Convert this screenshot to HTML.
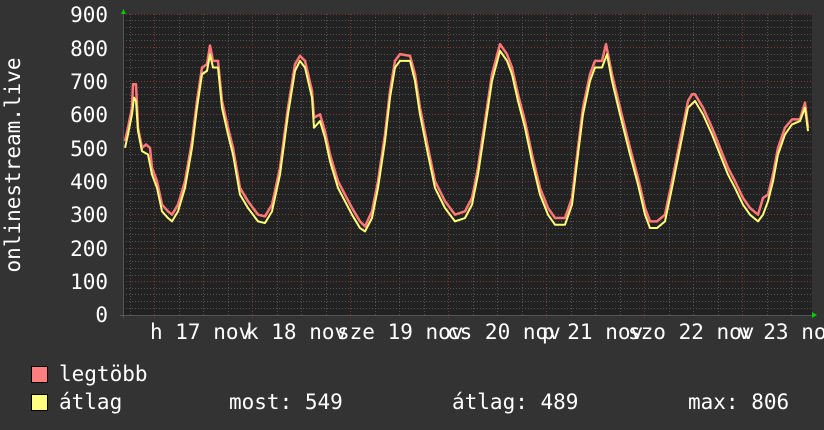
<!DOCTYPE html>
<html><head><meta charset="utf-8"><style>
html,body{margin:0;padding:0;background:#333;width:824px;height:430px;overflow:hidden}
svg{display:block}
text{font-family:"DejaVu Sans Mono","Liberation Mono",monospace;font-size:21px;fill:#fff}
</style></head><body>
<svg width="824" height="430" xmlns="http://www.w3.org/2000/svg">
<rect width="824" height="430" fill="#333"/>
<rect x="123" y="14" width="689" height="301" fill="#222"/>
<g stroke="#555" stroke-width="1" stroke-dasharray="1,2">
<line x1="123" x2="812" y1="308.5" y2="308.5"/><line x1="123" x2="812" y1="301.5" y2="301.5"/><line x1="123" x2="812" y1="294.5" y2="294.5"/><line x1="123" x2="812" y1="288.5" y2="288.5"/>
<line x1="123" x2="812" y1="275.5" y2="275.5"/><line x1="123" x2="812" y1="268.5" y2="268.5"/><line x1="123" x2="812" y1="261.5" y2="261.5"/><line x1="123" x2="812" y1="254.5" y2="254.5"/>
<line x1="123" x2="812" y1="241.5" y2="241.5"/><line x1="123" x2="812" y1="234.5" y2="234.5"/><line x1="123" x2="812" y1="228.5" y2="228.5"/><line x1="123" x2="812" y1="221.5" y2="221.5"/>
<line x1="123" x2="812" y1="208.5" y2="208.5"/><line x1="123" x2="812" y1="201.5" y2="201.5"/><line x1="123" x2="812" y1="194.5" y2="194.5"/><line x1="123" x2="812" y1="188.5" y2="188.5"/>
<line x1="123" x2="812" y1="174.5" y2="174.5"/><line x1="123" x2="812" y1="168.5" y2="168.5"/><line x1="123" x2="812" y1="161.5" y2="161.5"/><line x1="123" x2="812" y1="154.5" y2="154.5"/>
<line x1="123" x2="812" y1="141.5" y2="141.5"/><line x1="123" x2="812" y1="134.5" y2="134.5"/><line x1="123" x2="812" y1="127.5" y2="127.5"/><line x1="123" x2="812" y1="121.5" y2="121.5"/>
<line x1="123" x2="812" y1="107.5" y2="107.5"/><line x1="123" x2="812" y1="101.5" y2="101.5"/><line x1="123" x2="812" y1="94.5" y2="94.5"/><line x1="123" x2="812" y1="87.5" y2="87.5"/>
<line x1="123" x2="812" y1="74.5" y2="74.5"/><line x1="123" x2="812" y1="67.5" y2="67.5"/><line x1="123" x2="812" y1="60.5" y2="60.5"/><line x1="123" x2="812" y1="54.5" y2="54.5"/>
<line x1="123" x2="812" y1="40.5" y2="40.5"/><line x1="123" x2="812" y1="34.5" y2="34.5"/><line x1="123" x2="812" y1="27.5" y2="27.5"/><line x1="123" x2="812" y1="20.5" y2="20.5"/>
<line y1="14" y2="315" x1="130.5" x2="130.5"/><line y1="14" y2="315" x1="179.5" x2="179.5"/><line y1="14" y2="315" x1="203.5" x2="203.5"/><line y1="14" y2="315" x1="228.5" x2="228.5"/>
<line y1="14" y2="315" x1="277.5" x2="277.5"/><line y1="14" y2="315" x1="301.5" x2="301.5"/><line y1="14" y2="315" x1="326.5" x2="326.5"/>
<line y1="14" y2="315" x1="375.5" x2="375.5"/><line y1="14" y2="315" x1="399.5" x2="399.5"/><line y1="14" y2="315" x1="424.5" x2="424.5"/>
<line y1="14" y2="315" x1="473.5" x2="473.5"/><line y1="14" y2="315" x1="497.5" x2="497.5"/><line y1="14" y2="315" x1="522.5" x2="522.5"/>
<line y1="14" y2="315" x1="571.5" x2="571.5"/><line y1="14" y2="315" x1="595.5" x2="595.5"/><line y1="14" y2="315" x1="620.5" x2="620.5"/>
<line y1="14" y2="315" x1="669.5" x2="669.5"/><line y1="14" y2="315" x1="693.5" x2="693.5"/><line y1="14" y2="315" x1="718.5" x2="718.5"/>
<line y1="14" y2="315" x1="767.5" x2="767.5"/><line y1="14" y2="315" x1="791.5" x2="791.5"/>
</g>
<g stroke="#7a3a3a" stroke-width="1" stroke-dasharray="1,2">
<line x1="123" x2="812" y1="281.5" y2="281.5"/><line x1="123" x2="812" y1="248.5" y2="248.5"/><line x1="123" x2="812" y1="214.5" y2="214.5"/><line x1="123" x2="812" y1="181.5" y2="181.5"/><line x1="123" x2="812" y1="147.5" y2="147.5"/><line x1="123" x2="812" y1="114.5" y2="114.5"/><line x1="123" x2="812" y1="81.5" y2="81.5"/><line x1="123" x2="812" y1="47.5" y2="47.5"/><line x1="123" x2="812" y1="14.5" y2="14.5"/>
<line y1="14" y2="318" x1="154.5" x2="154.5"/><line y1="14" y2="318" x1="252.5" x2="252.5"/><line y1="14" y2="318" x1="350.5" x2="350.5"/><line y1="14" y2="318" x1="448.5" x2="448.5"/><line y1="14" y2="318" x1="546.5" x2="546.5"/><line y1="14" y2="318" x1="644.5" x2="644.5"/><line y1="14" y2="318" x1="742.5" x2="742.5"/>
</g>
<line x1="120" x2="814" y1="315.5" y2="315.5" stroke="#555"/>
<line x1="123.5" x2="123.5" y1="12" y2="318" stroke="#555"/>
<polygon points="121,14 126,14 123.5,9" fill="#0c0"/>
<polygon points="812,312 812,318 817,315" fill="#0c0"/>
<g transform="translate(0,315) scale(1,-0.3344)" fill="none" stroke-linejoin="round">
<polyline vector-effect="non-scaling-stroke" stroke="#ff7777" stroke-width="2.5" points="125,520 128,560 132,620 133,690 136,690 138,560 142,500 146,510 150,500 152,440 157,400 162,330 168,310 172,300 178,330 185,400 192,520 197,640 202,740 207,750 210,806 213,760 218,760 222,640 228,560 233,500 240,380 248,340 258,300 265,295 272,330 280,440 288,620 295,750 300,775 305,760 312,670 314,590 320,600 325,550 330,480 338,400 345,360 352,320 360,280 365,265 372,310 378,400 385,540 390,670 395,760 400,780 410,775 415,720 420,620 428,500 435,400 445,340 455,300 465,310 472,350 478,440 485,580 492,720 500,810 507,780 512,740 518,660 525,580 532,480 540,380 548,320 555,290 565,290 572,350 578,500 583,620 590,720 595,760 602,760 606,810 612,720 620,620 630,500 638,410 645,320 650,280 657,280 665,300 672,400 680,520 688,640 692,660 695,660 703,620 712,560 720,500 728,440 735,400 743,350 750,320 758,300 763,350 768,360 773,420 778,500 785,560 792,585 800,585 805,635 808,560"/>
<polyline vector-effect="non-scaling-stroke" stroke="#ffff77" stroke-width="2" points="125,500 128,540 132,600 134,650 136,640 138,550 142,490 148,480 152,420 157,380 162,310 168,290 172,280 178,310 185,380 192,500 197,620 202,720 207,730 210,780 213,740 218,740 222,620 228,540 233,480 240,360 248,320 258,280 265,275 272,310 280,420 288,600 295,730 300,760 305,740 312,650 314,560 320,580 325,530 330,460 338,380 345,340 352,300 360,260 365,250 372,290 378,380 385,520 390,650 395,740 400,760 410,760 415,700 420,600 428,480 435,380 445,320 455,280 465,290 472,330 478,420 485,560 492,700 500,790 507,760 512,720 518,640 525,560 532,460 540,360 548,300 555,270 565,270 572,330 578,480 583,600 590,700 595,740 602,740 607,780 612,700 620,600 630,480 638,390 645,300 650,260 657,260 665,280 672,380 680,500 688,620 695,640 703,600 712,540 720,480 728,420 735,380 743,330 750,300 758,280 763,300 768,340 773,400 778,480 785,540 792,570 800,580 805,620 808,550"/>
</g>
<g text-anchor="end">
<text x="108" y="22">900</text><text x="108" y="56">800</text><text x="108" y="89">700</text><text x="108" y="122">600</text><text x="108" y="156">500</text><text x="108" y="189">400</text><text x="108" y="222">300</text><text x="108" y="256">200</text><text x="108" y="289">100</text><text x="108" y="322">0</text>
</g>
<text transform="translate(20,165) rotate(-90)" text-anchor="middle">onlinestream.live</text>
<text x="150" y="339">h 17 nov</text>
<text x="246" y="339">k 18 nov</text>
<text x="337" y="339">sze 19 nov</text>
<text x="447" y="339">cs 20 nov</text>
<text x="542" y="339">p 21 nov</text>
<text x="628" y="339">szo 22 nov</text>
<text x="738" y="339">v 23 nov</text>
<rect x="31.5" y="366.5" width="16" height="16" fill="#ff7f7f" stroke="#000"/>
<rect x="31.5" y="394.5" width="16" height="16" fill="#ffff7f" stroke="#000"/>
<text x="59" y="381">legtöbb</text>
<text x="59" y="409">átlag</text>
<text x="229" y="409">most: 549</text>
<text x="452" y="409">átlag: 489</text>
<text x="688" y="409">max: 806</text>
</svg>
</body></html>
